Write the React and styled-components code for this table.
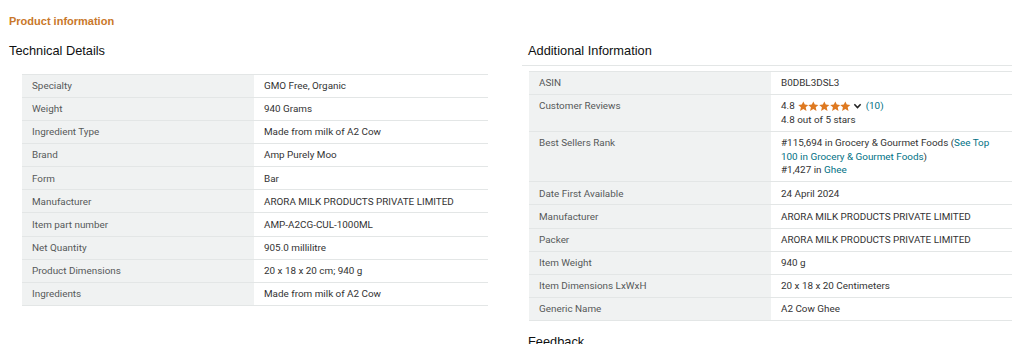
import React from "react";
import styled, { createGlobalStyle } from "styled-components";

const Global = createGlobalStyle`
  html, body { margin: 0; padding: 0; background: #fff; }
  body { font-family: "Liberation Sans", Arial, sans-serif; color: #0f1111; }
`;

const Page = styled.div`
  width: 1024px;
  height: 344px;
  overflow: hidden;
  padding: 14px 0 0 9px;
  box-sizing: border-box;
`;

const Title = styled.div`
  font-size: 11px;
  line-height: 14px;
  font-weight: 700;
  color: #c9782a;
`;

const Columns = styled.div`
  display: flex;
  gap: 24px;
  margin-top: 15px;
`;

const Column = styled.div`
  width: ${(p) => p.$w}px;
  flex: none;
`;

const Heading = styled.h2`
  margin: 0;
  padding-left: ${(p) => p.$indent || 0}px;
  font-size: 12.8px;
  line-height: 16px;
  font-weight: 400;
  color: #0f1111;
`;

const Divider = styled.div`
  height: 1px;
  background: #e3e6e6;
  margin-top: 6px;
`;

const Table = styled.div`
  margin-top: ${(p) => p.$top}px;
  margin-left: ${(p) => p.$left}px;
  width: ${(p) => p.$w}px;
  border-top: 1px solid #e3e6e6;
  display: grid;
  grid-template-columns: ${(p) => p.$key}px 1fr;
  font-family: Roboto, "Liberation Sans", sans-serif;
  font-size: 9.9px;
  line-height: 13.7px;
`;

const Key = styled.div`
  background: #f0f2f2;
  color: #565959;
  padding: 4.2px 10px;
  border-bottom: 1px solid #e3e6e6;
`;

const Value = styled.div`
  background: #fff;
  color: #333;
  padding: 4.2px 10px;
  border-bottom: 1px solid #e3e6e6;
`;

const Link = styled.span`
  color: #007185;
`;

const Rating = styled.span`
  display: inline-flex;
  align-items: center;
  gap: 2px;
  vertical-align: top;
`;

const Stars = styled.span`
  display: inline-flex;
  align-items: center;
  margin-left: 1px;
`;

const Star = () => (
  <svg width="10.6" height="10.5" viewBox="0 0 24 23">
    <polygon
      points="12,0.5 15.4,7.8 23.5,8.5 17.4,13.9 19.3,22 12,17.7 4.7,22 6.6,13.9 0.5,8.5 8.6,7.8"
      fill="#de7921"
    />
  </svg>
);

const Chevron = () => (
  <svg width="9" height="8" viewBox="0 0 10 8" style={{ margin: "0 2px 0 0" }}>
    <polyline points="1.5,2 5,5.8 8.5,2" fill="none" stroke="#222" strokeWidth="1.7" />
  </svg>
);

const Feedback = styled(Heading)`
  margin-top: 13px;
`;

const tech = [
  ["Specialty", "GMO Free, Organic"],
  ["Weight", "940 Grams"],
  ["Ingredient Type", "Made from milk of A2 Cow"],
  ["Brand", "Amp Purely Moo"],
  ["Form", "Bar"],
  ["Manufacturer", "ARORA MILK PRODUCTS PRIVATE LIMITED"],
  ["Item part number", "AMP-A2CG-CUL-1000ML"],
  ["Net Quantity", "905.0 millilitre"],
  ["Product Dimensions", "20 x 18 x 20 cm; 940 g"],
  ["Ingredients", "Made from milk of A2 Cow"],
];

const additional = [
  ["ASIN", "B0DBL3DSL3"],
  [
    "Customer Reviews",
    <>
      <Rating>
        4.8
        <Stars>
          <Star />
          <Star />
          <Star />
          <Star />
          <Star />
        </Stars>
        <Chevron />
        <Link>(10)</Link>
      </Rating>
      <br />
      4.8 out of 5 stars
    </>,
  ],
  [
    "Best Sellers Rank",
    <>
      #115,694 in Grocery &amp; Gourmet Foods (<Link>See Top 100 in Grocery &amp; Gourmet Foods</Link>)
      <br />
      #1,427 in <Link>Ghee</Link>
    </>,
  ],
  ["Date First Available", "24 April 2024"],
  ["Manufacturer", "ARORA MILK PRODUCTS PRIVATE LIMITED"],
  ["Packer", "ARORA MILK PRODUCTS PRIVATE LIMITED"],
  ["Item Weight", "940 g"],
  ["Item Dimensions LxWxH", "20 x 18 x 20 Centimeters"],
  ["Generic Name", "A2 Cow Ghee"],
];

export default function App() {
  return (
    <>
      <Global />
      <Page>
        <Title>Product information</Title>
        <Columns>
          <Column $w={489}>
            <Heading>Technical Details</Heading>
            <Table $top={15} $left={13} $w={466} $key={232}>
              {tech.map(([k, v]) => (
                <React.Fragment key={k}>
                  <Key>{k}</Key>
                  <Value>{v}</Value>
                </React.Fragment>
              ))}
            </Table>
          </Column>
          <Column $w={490}>
            <Heading $indent={6}>Additional Information</Heading>
            <Divider />
            <Table $top={5} $left={7} $w={483} $key={242}>
              {additional.map(([k, v]) => (
                <React.Fragment key={k}>
                  <Key>{k}</Key>
                  <Value>{v}</Value>
                </React.Fragment>
              ))}
            </Table>
            <Feedback $indent={6}>Feedback</Feedback>
          </Column>
        </Columns>
      </Page>
    </>
  );
}
